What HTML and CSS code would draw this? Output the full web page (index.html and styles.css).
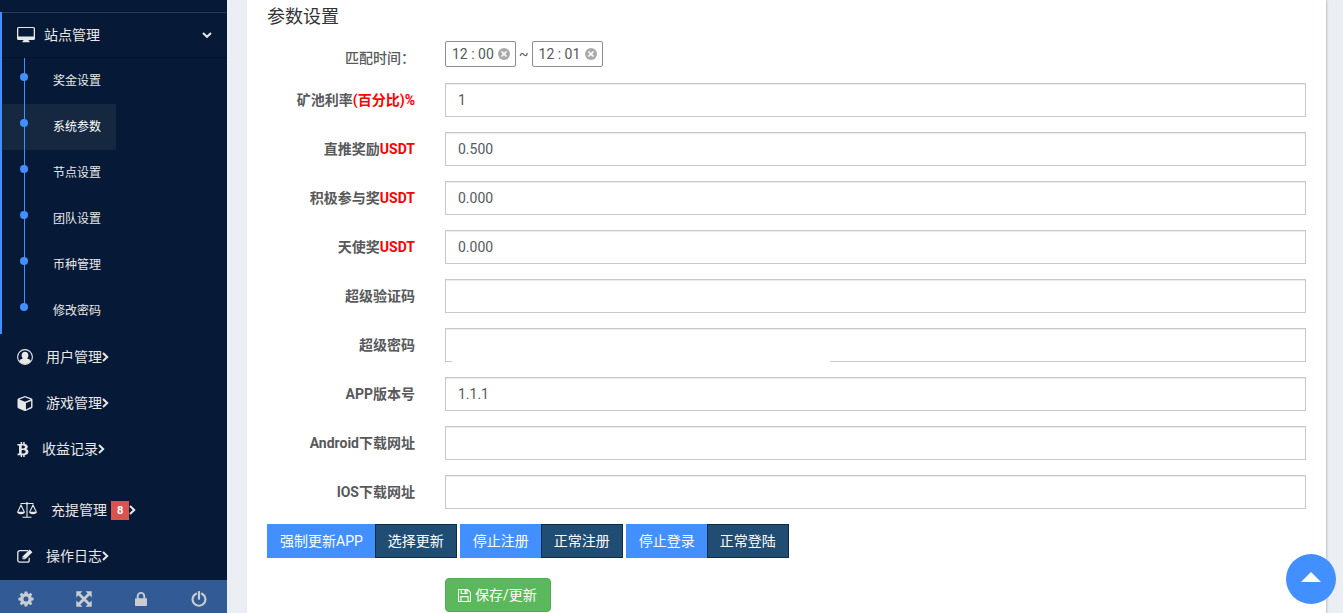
FILE: index.html
```html
<!DOCTYPE html>
<html lang="zh-CN">
<head>
<meta charset="utf-8">
<title>参数设置</title>
<link rel="stylesheet" href="styles.css">
</head>
<body>
<svg class="sprite" aria-hidden="true">
  <symbol id="angle" viewBox="0 0 12 12"><path d="M4 2l4.200 4L4 10" fill="none" stroke="currentColor" stroke-width="2"/></symbol>
  <symbol id="clear" viewBox="0 0 12 12"><circle cx="6" cy="6" r="6" fill="#aaa"/><path d="M3.500 3.500l5 5m0-5l-5 5" stroke="#fff" stroke-width="1.600"/></symbol>
</svg>
<div class="layout">
  <aside class="sidebar">
    <nav class="menu">
      <section class="menu-open">
        <a class="menu-link menu-head" href="#">
          <svg class="icon icon-desktop" viewBox="0 0 18 16"><path fill="currentColor" fill-rule="evenodd" d="M1.500 0h15A1.500 1.500 0 0 1 18 1.500v10a1.500 1.500 0 0 1-1.500 1.500H11.500l.5 1.200h.6v1H5.400v-1H6l.5-1.200h-5A1.500 1.500 0 0 1 0 11.500v-10A1.500 1.500 0 0 1 1.500 0zM1.300 1.500v8h15.400v-8l-.4-.4H1.700z"/></svg>
          <span>站点管理</span>
          <svg class="caret" viewBox="0 0 12 12"><path d="M2 4l4 3.800L10 4" fill="none" stroke="currentColor" stroke-width="2"/></svg>
        </a>
        <ul class="submenu">
          <li><a href="#">奖金设置</a></li>
          <li><a class="current" href="#">系统参数</a></li>
          <li><a href="#">节点设置</a></li>
          <li><a href="#">团队设置</a></li>
          <li><a href="#">币种管理</a></li>
          <li><a href="#">修改密码</a></li>
        </ul>
      </section>
      <a class="menu-link" href="#">
        <svg class="icon icon-user" viewBox="0 0 16 16"><circle cx="8" cy="8" r="7.400" fill="none" stroke="currentColor" stroke-width="1.100"/><path fill="currentColor" d="M8 2.800c2 0 3.400 1.300 3.400 3.400 0 1.300-.5 2.500-1.300 3.200l2.700 1.200 1 1.400A7 7 0 0 1 8 15a7 7 0 0 1-5.800-3l1-1.400 2.700-1.200c-.8-.7-1.300-1.900-1.300-3.200C4.600 4.100 6 2.800 8 2.800z"/></svg>
        <span>用户管理</span><svg class="angle"><use href="#angle"/></svg>
      </a>
      <a class="menu-link" href="#">
        <svg class="icon icon-cube" viewBox="0 0 16 16"><path fill="currentColor" fill-rule="evenodd" d="M8 0l7.300 2.700.7.900v8.400l-.7 1L8.500 16h-1L.7 13 0 12V3.600l.7-.9zM8 1.400L2 3.700 8 6l6-2.300zM9 7.400v6.900l5.500-2.800V5.200z"/></svg>
        <span>游戏管理</span><svg class="angle"><use href="#angle"/></svg>
      </a>
      <a class="menu-link" href="#">
        <svg class="icon icon-coin" viewBox="0 0 12 16"><path fill="currentColor" fill-rule="evenodd" d="M0 2h3.500V0H5v2h1.200V0h1.600v2.100c2 .3 3.300 1.200 3.300 3 0 1.200-.6 2-1.700 2.400 1.500.4 2.400 1.400 2.400 3 0 2.200-1.500 3.300-4 3.500v2H6.200v-2H5v2H3.500v-2H0l.4-1.800h1.400V3.700H0zm4.600 1.700v3.200c2 0 3.500-.2 3.500-1.600S6.600 3.700 4.600 3.700zm0 4.800v3.700c2.400 0 4.200-.2 4.200-1.900 0-1.600-1.800-1.800-4.200-1.800z"/></svg>
        <span>收益记录</span><svg class="angle"><use href="#angle"/></svg>
      </a>
      <a class="menu-link menu-spaced" href="#">
        <svg class="icon icon-scale" viewBox="0 0 20 16"><path fill="none" stroke="currentColor" stroke-width="1.100" d="M3.500 1.500h5.300m2.400 0h5.300M10 2.500V15M5.500 15.300h9M.7 10l3.300-7 3.300 7m5.400 0L16 3l3.300 7"/><circle cx="10" cy="1.500" r="1.300" fill="currentColor"/><path fill="currentColor" d="M0 9.700h8c0 1.600-1.700 2.500-4 2.500s-4-.9-4-2.500zm12 0h8c0 1.600-1.700 2.500-4 2.500s-4-.9-4-2.500z"/></svg>
        <span>充提管理</span><span class="badge">8</span><svg class="angle"><use href="#angle"/></svg>
      </a>
      <a class="menu-link" href="#">
        <svg class="icon icon-edit" viewBox="0 0 16 14"><path fill="none" stroke="currentColor" stroke-width="1.300" d="M11 1.600H2.800A2 2 0 0 0 .8 3.600v7.600a2 2 0 0 0 2 2h7.400a2 2 0 0 0 2-2V8.800"/><path fill="currentColor" d="M12.700.5l2.700 2.700-7.200 7.100H5.500V7.600zM6.500 8v1.300h1.300z"/></svg>
        <span>操作日志</span><svg class="angle"><use href="#angle"/></svg>
      </a>
    </nav>
    <div class="tools">
      <button type="button" aria-label="设置"><svg viewBox="0 0 16 16"><path fill="currentColor" fill-rule="evenodd" d="M6.700.5h2.600l.4 2 1.200.5 1.700-1.200 1.700 1.700L13.100 5.200l.5 1.200 2 .3v2.600l-2 .4-.5 1.200 1.200 1.700-1.700 1.700-1.700-1.200-1.200.5-.4 2H6.700l-.4-2-1.200-.5-1.700 1.200-1.700-1.700 1.200-1.700-.5-1.200-2-.4V6.700l2-.3.5-1.200-1.200-1.700 1.700-1.700L5.100 3l1.200-.5zM8 5.500a2.500 2.500 0 1 0 0 5 2.500 2.500 0 0 0 0-5z"/></svg></button>
      <button type="button" aria-label="全屏"><svg viewBox="0 0 16 16"><path d="M3 3l10 10M13 3L3 13" stroke="currentColor" stroke-width="2.800"/><path fill="currentColor" d="M.3.300h6.200l-6.200 6.200zM15.700.300v6.200L9.500.300zM.3 15.700V9.500l6.200 6.200zM15.700 15.700H9.500l6.200-6.200z"/></svg></button>
      <button type="button" aria-label="锁定"><svg viewBox="0 0 16 16"><path d="M4.700 8V5.200a3.300 3.300 0 0 1 6.600 0V8" fill="none" stroke="currentColor" stroke-width="1.900"/><rect x="2" y="7.300" width="12" height="7.700" rx=".7" fill="currentColor"/></svg></button>
      <button type="button" aria-label="退出"><svg viewBox="0 0 16 16"><path d="M5 2.700a6.400 6.400 0 1 0 6 0M8 1v6.800" fill="none" stroke="currentColor" stroke-width="2.200" stroke-linecap="round"/></svg></button>
    </div>
  </aside>
  <main class="content">
    <form class="panel">
      <h1>参数设置</h1>
      <div class="row row-time">
        <label for="from">匹配时间<span class="colon">：</span></label>
        <div class="range">
          <span class="time"><input id="from" type="text" value="12 : 00"><button type="button" aria-label="清除"><svg><use href="#clear"/></svg></button></span>
          <span>~</span>
          <span class="time"><input type="text" value="12 : 01" aria-label="结束时间"><button type="button" aria-label="清除"><svg><use href="#clear"/></svg></button></span>
        </div>
      </div>
      <div class="row"><label for="f1">矿池利率<em>(百分比)%</em></label><div class="field"><input id="f1" type="text" value="1"></div></div>
      <div class="row"><label for="f2">直推奖励<em>USDT</em></label><div class="field"><input id="f2" type="text" value="0.500"></div></div>
      <div class="row"><label for="f3">积极参与奖<em>USDT</em></label><div class="field"><input id="f3" type="text" value="0.000"></div></div>
      <div class="row"><label for="f4">天使奖<em>USDT</em></label><div class="field"><input id="f4" type="text" value="0.000"></div></div>
      <div class="row"><label for="f5">超级验证码</label><div class="field"><input id="f5" type="text"></div></div>
      <div class="row"><label for="f6">超级密码</label><div class="field field-masked"><input id="f6" type="text"></div></div>
      <div class="row"><label for="f7">APP版本号</label><div class="field"><input id="f7" type="text" value="1.1.1"></div></div>
      <div class="row"><label for="f8">Android下载网址</label><div class="field"><input id="f8" type="text"></div></div>
      <div class="row"><label for="f9">IOS下载网址</label><div class="field"><input id="f9" type="text"></div></div>
      <div class="switches">
        <div class="group"><button class="btn on" type="button">强制更新APP</button><button class="btn off" type="button">选择更新</button></div>
        <div class="group"><button class="btn on" type="button">停止注册</button><button class="btn off" type="button">正常注册</button></div>
        <div class="group"><button class="btn on" type="button">停止登录</button><button class="btn off" type="button">正常登陆</button></div>
      </div>
      <div class="actions">
        <button class="btn save" type="button"><svg viewBox="0 0 12 12"><path fill="none" stroke="currentColor" d="M.5.500h8.300l2.700 2.700v8.300H.5zM3 .5v3.700h5.300V.5M2.700 11.500V7h6.600v4.500"/><path fill="currentColor" d="M6 1h1.500v2.500H6z"/></svg>保存/更新</button>
      </div>
    </form>
  </main>
</div>
<button class="to-top" type="button" aria-label="返回顶部"></button>
</body>
</html>
```
FILE: styles.css
```css
* {
  box-sizing: border-box;
}

body {
  margin: 0;
  background: #ebeef3;
  color: #58595b;
  font: 14px/20px Roboto, "Noto Sans CJK SC", sans-serif;
}

button,
input {
  font: inherit;
  color: inherit;
}

button {
  cursor: pointer;
}

.sprite {
  position: absolute;
  width: 0;
  height: 0;
}

.layout {
  display: flex;
  min-height: 100vh;
}

.sidebar {
  display: flex;
  flex: 0 0 227px;
  flex-direction: column;
  padding-top: 12px;
  background: #061a37;
  color: #e8e8e8;
}

.sidebar a {
  color: inherit;
  text-decoration: none;
}

.menu-open {
  border-left: 2px solid #428fff;
}

.menu-link {
  display: flex;
  align-items: center;
  height: 46px;
  padding-left: 17px;
}

.menu-head {
  padding: 0 14px 0 15px;
  border-top: 1px solid #2a3b53;
  border-bottom: 1px solid #041328;
}

.menu-spaced {
  margin-top: 15px;
}

.icon {
  flex: none;
  height: 16px;
}

.icon-desktop {
  width: 18px;
  margin-right: 9px;
}

.icon-user,
.icon-cube,
.icon-edit {
  width: 16px;
  margin-right: 13px;
}

.icon-cube {
  height: 15px;
}

.icon-edit {
  height: 14px;
}

.icon-coin {
  width: 12px;
  height: 15px;
  margin-right: 13px;
}

.icon-scale {
  width: 20px;
  margin-right: 14px;
}

.caret {
  width: 12px;
  height: 12px;
  margin-left: auto;
}

.angle {
  width: 12px;
  height: 12px;
  margin-left: -3px;
}

.badge {
  margin-left: 4px;
  padding: 0 6px;
  background: #d9534f;
  color: #fff;
  font-size: 11px;
  font-weight: 700;
  line-height: 19px;
}

.submenu {
  margin: 0;
  padding: 0;
  list-style: none;
  font-size: 12px;
}

.submenu li {
  position: relative;
  display: flex;
  height: 46px;
}

.submenu li::before {
  content: "";
  position: absolute;
  top: 0;
  left: 22px;
  width: 1px;
  height: 100%;
  background: #428fff;
}

.submenu li:last-child::before {
  height: 20px;
}

.submenu li::after {
  content: "";
  position: absolute;
  top: 15px;
  left: 18px;
  width: 8px;
  height: 8px;
  border-radius: 50%;
  background: #428fff;
}

.submenu a {
  display: flex;
  align-items: center;
  padding: 0 15px 0 51px;
}

.submenu .current {
  background: #152840;
  color: #fff;
}

.tools {
  display: grid;
  grid-template-columns: repeat(4, 1fr);
  column-gap: 3px;
  margin-top: auto;
  background: #325a94;
  color: #c9ccd1;
}

.tools button {
  height: 33px;
  padding: 4px 0 0 18px;
  border: 0;
  background: none;
  text-align: left;
}

.tools button svg {
  display: block;
  width: 16px;
  height: 16px;
}

.content {
  flex: 1;
  padding: 0 17px 0 20px;
}

.panel {
  min-height: 100%;
  padding: 7px 20px 0;
  background: #fff;
  box-shadow: 1px 0 2px #bbbdc4;
}

h1 {
  margin: 0 0 14px;
  color: #333;
  font-size: 18px;
  font-weight: 400;
  line-height: 20px;
}

.row {
  display: flex;
  align-items: center;
  gap: 30px;
  margin-bottom: 15px;
}

.row label {
  flex: 0 0 148px;
  font-weight: 700;
  text-align: right;
}

.row label em {
  color: #f00;
  font-style: normal;
}

.row-time {
  align-items: flex-end;
}

.row-time label {
  font-weight: 500;
}

.colon {
  font-family: "Noto Sans CJK TC", sans-serif;
  line-height: 1;
}

.range {
  display: flex;
  align-items: center;
  gap: 3px;
  padding-bottom: 1px;
}

.time {
  display: flex;
  align-items: center;
  width: 71px;
  height: 26px;
  padding: 0 5px 0 6px;
  border: 1px solid #8d8b98;
  border-radius: 2px;
}

.time input {
  width: 46px;
  padding: 0;
  border: 0;
  outline: 0;
  background: none;
}

.time button {
  flex: none;
  padding: 0;
  border: 0;
  background: none;
}

.time svg {
  display: block;
  width: 12px;
  height: 12px;
}

.field {
  position: relative;
  flex: 1;
}

.field input {
  display: block;
  width: 100%;
  height: 34px;
  padding: 6px 12px;
  border: 1px solid #c8c8c8;
  outline: 0;
  background: #fff;
  box-shadow: inset 0 1px 1px rgba(0, 0, 0, 0.08);
}

.field-masked::after {
  content: "";
  position: absolute;
  bottom: 0;
  left: 7px;
  width: 378px;
  height: 24px;
  background: #fff;
}

.switches {
  display: flex;
  gap: 3px;
}

.group {
  display: flex;
}

.btn {
  height: 34px;
  padding: 0 12px;
  border: 1px solid transparent;
  color: #fff;
}

.on {
  padding: 0 11px 0 12px;
  border-color: #428fff;
  background: #428fff;
}

.off {
  border-color: #122b45;
  background: #204d74;
}

.actions {
  margin-top: 20px;
  padding-left: 178px;
}

.save {
  display: flex;
  align-items: center;
  gap: 4px;
  padding: 0 13px 0 12px;
  border-color: #4cae4c;
  border-radius: 4px;
  background: #5cb85c;
}

.save svg {
  width: 13px;
  height: 13px;
}

.to-top {
  position: fixed;
  right: 7px;
  bottom: 9px;
  width: 50px;
  height: 50px;
  padding: 0 0 4px;
  border: 0;
  border-radius: 50%;
  background: #428fff;
}

.to-top::before {
  content: "";
  display: block;
  width: 0;
  margin: 0 auto;
  border: 10px solid transparent;
  border-top: 0;
  border-bottom-color: #fff;
}
```
